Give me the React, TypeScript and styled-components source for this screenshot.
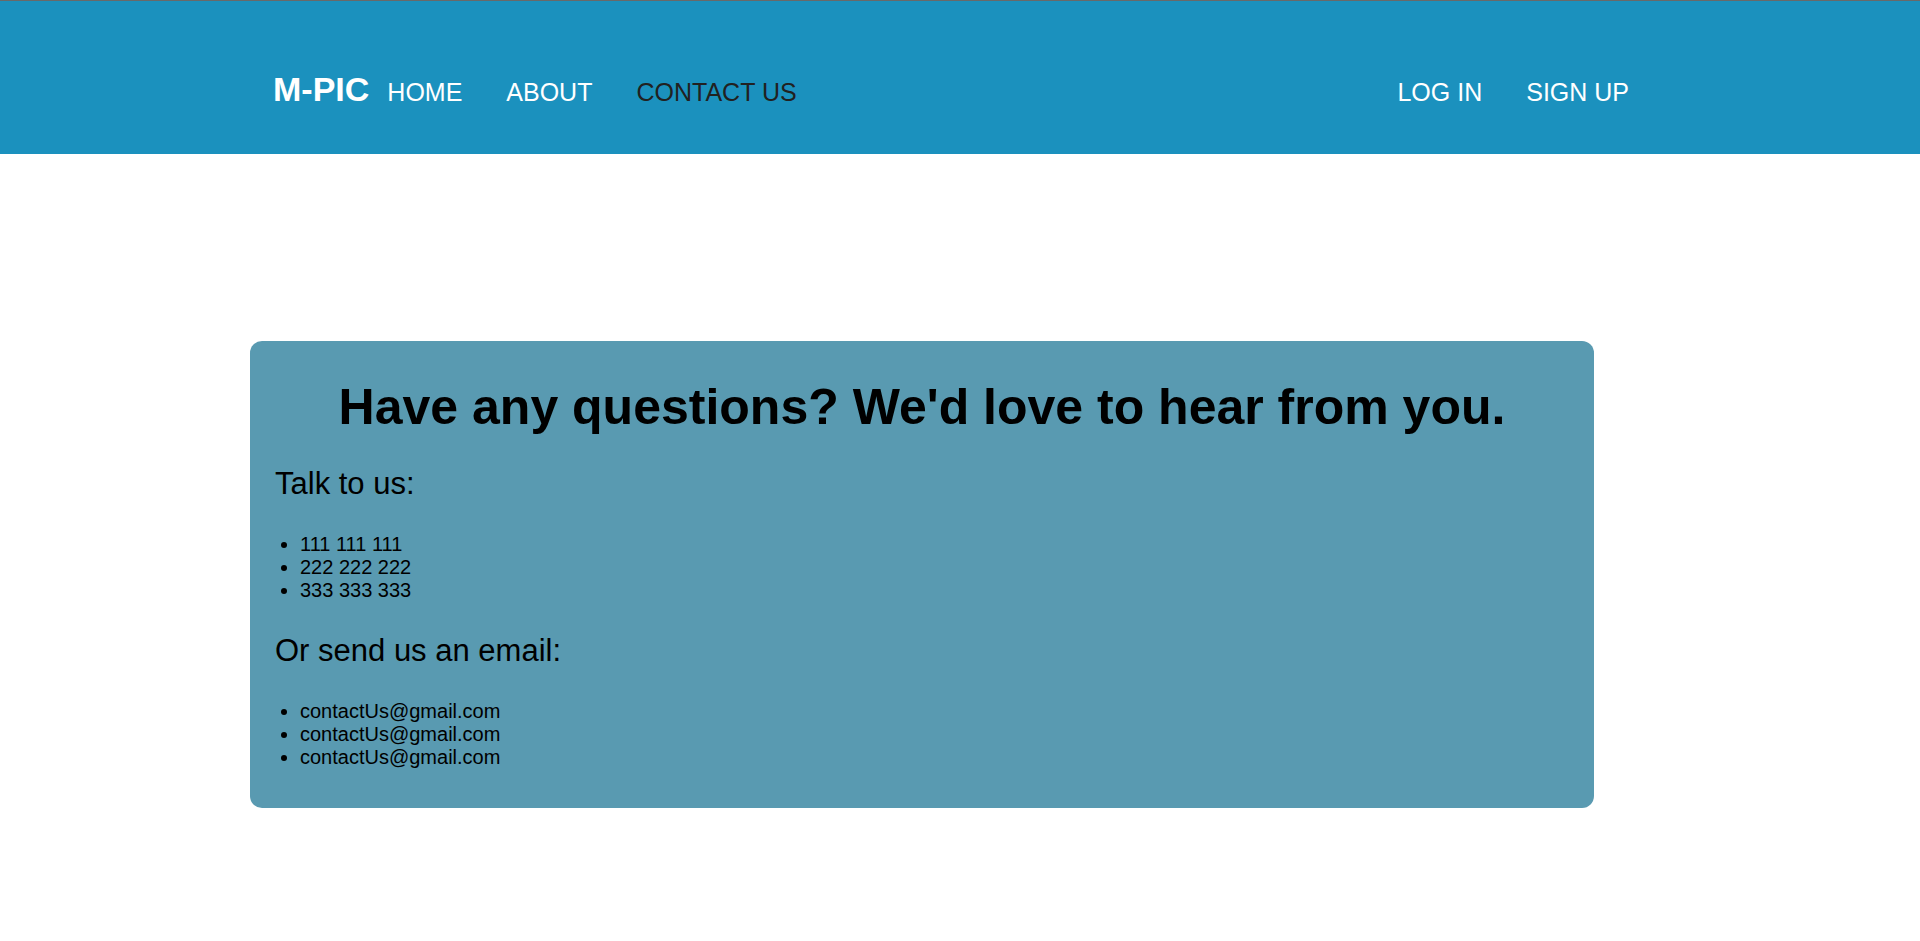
import React from 'react';
import styled, { createGlobalStyle } from 'styled-components';

const GlobalStyle = createGlobalStyle`
  body {
    margin: 0;
    background: #ffffff;
    color: #000000;
    font-family: Arial, 'Liberation Sans', sans-serif;
    font-size: 20px;
    line-height: 23px;
  }
`;

const Header = styled.header`
  display: flex;
  align-items: baseline;
  gap: 18px;
  padding: 69px 291px 46px 273px;
  border-top: 1px solid #696969;
  background: #1b91be;
`;

const Brand = styled.a`
  color: #ffffff;
  font-size: 34px;
  font-weight: bold;
  line-height: 38px;
  text-decoration: none;
`;

const Nav = styled.nav`
  display: flex;
  flex: 1;
  justify-content: space-between;
`;

const LinkGroup = styled.div`
  display: flex;
  gap: 44px;
`;

const NavLink = styled.a<{ $active?: boolean }>`
  color: ${({ $active }) => ($active ? '#212121' : '#ffffff')};
  font-size: 25px;
  line-height: 28px;
  text-decoration: none;
  white-space: nowrap;
`;

const Card = styled.main`
  box-sizing: border-box;
  width: 70%;
  margin: 187px 0 0 250px;
  padding: 37px 25px 39px;
  border-radius: 12px;
  background: #599ab1;
`;

const Title = styled.h1`
  margin: 0 0 30px;
  font-size: 50px;
  line-height: 58px;
  text-align: center;
`;

const Subtitle = styled.p`
  margin: 0 0 31px;
  font-size: 31px;
  line-height: 36px;
`;

const ContactList = styled.ul`
  margin: 0;
  padding-left: 25px;

  & + p {
    margin-top: 31px;
  }
`;

const phones = ['111 111 111', '222 222 222', '333 333 333'];
const emails = ['contactUs@gmail.com', 'contactUs@gmail.com', 'contactUs@gmail.com'];

export default function App() {
  return (
    <>
      <GlobalStyle />
      <Header>
        <Brand href="#">M-PIC</Brand>
        <Nav>
          <LinkGroup>
            <NavLink href="#home">HOME</NavLink>
            <NavLink href="#about">ABOUT</NavLink>
            <NavLink href="#contact" $active aria-current="page">CONTACT US</NavLink>
          </LinkGroup>
          <LinkGroup>
            <NavLink href="#login">LOG IN</NavLink>
            <NavLink href="#signup">SIGN UP</NavLink>
          </LinkGroup>
        </Nav>
      </Header>
      <Card>
        <Title>Have any questions? We'd love to hear from you.</Title>
        <Subtitle>Talk to us:</Subtitle>
        <ContactList>
          {phones.map((phone) => (
            <li key={phone}>{phone}</li>
          ))}
        </ContactList>
        <Subtitle>Or send us an email:</Subtitle>
        <ContactList>
          {emails.map((email, index) => (
            <li key={index}>{email}</li>
          ))}
        </ContactList>
      </Card>
    </>
  );
}
